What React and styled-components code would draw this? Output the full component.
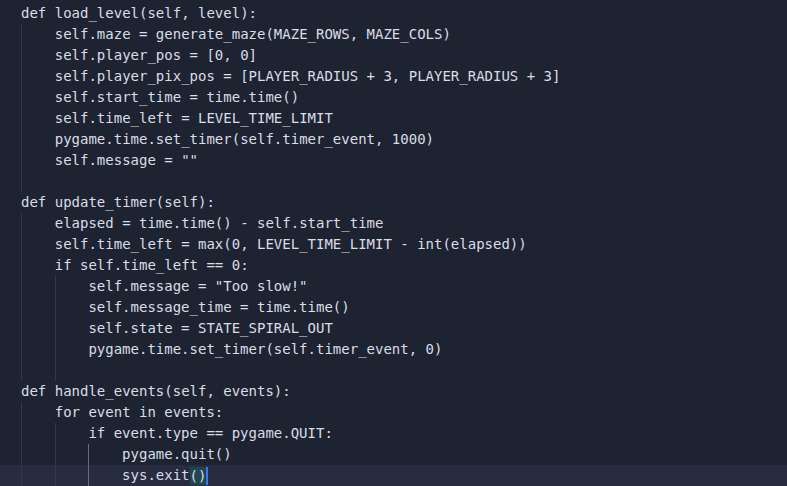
import React from "react";
import styled, { createGlobalStyle } from "styled-components";

const lines = [
  { level: 0, text: "def load_level(self, level):" },
  { level: 1, text: "self.maze = generate_maze(MAZE_ROWS, MAZE_COLS)" },
  { level: 1, text: "self.player_pos = [0, 0]" },
  { level: 1, text: "self.player_pix_pos = [PLAYER_RADIUS + 3, PLAYER_RADIUS + 3]" },
  { level: 1, text: "self.start_time = time.time()" },
  { level: 1, text: "self.time_left = LEVEL_TIME_LIMIT" },
  { level: 1, text: "pygame.time.set_timer(self.timer_event, 1000)" },
  { level: 1, text: 'self.message = ""' },
  { level: 1, text: "" },
  { level: 0, text: "def update_timer(self):" },
  { level: 1, text: "elapsed = time.time() - self.start_time" },
  { level: 1, text: "self.time_left = max(0, LEVEL_TIME_LIMIT - int(elapsed))" },
  { level: 1, text: "if self.time_left == 0:" },
  { level: 2, text: 'self.message = "Too slow!"' },
  { level: 2, text: "self.message_time = time.time()" },
  { level: 2, text: "self.state = STATE_SPIRAL_OUT" },
  { level: 2, text: "pygame.time.set_timer(self.timer_event, 0)" },
  { level: 2, text: "" },
  { level: 0, text: "def handle_events(self, events):" },
  { level: 1, text: "for event in events:" },
  { level: 2, text: "if event.type == pygame.QUIT:" },
  { level: 3, text: "pygame.quit()", active: 2 },
  { level: 3, text: "sys.exit", active: 2, current: true },
];

const GlobalStyle = createGlobalStyle`
  html, body {
    margin: 0;
    padding: 0;
    background: #1e2332;
    overflow: hidden;
  }
`;

const Editor = styled.div`
  width: 787px;
  height: 486px;
  box-sizing: border-box;
  padding-top: 3px;
  background: #1e2332;
  font-family: "DejaVu Sans Mono", monospace;
  font-size: 14px;
  line-height: 21px;
  color: #d9dde6;
  overflow: hidden;
`;

const Line = styled.div`
  display: flex;
  align-items: center;
  height: 21px;
  padding-left: 21px;
  white-space: pre;
  background: ${(p) => (p.$current ? "#272c40" : "transparent")};
`;

const Indent = styled.span`
  flex: 0 0 4ch;
  width: 4ch;
  height: 21px;
  box-sizing: border-box;
  border-left: 1px solid ${(p) => (p.$active ? "#656b7a" : "#333949")};
`;

const Code = styled.span`
  display: flex;
  align-items: center;
  height: 21px;
  line-height: 21px;
`;

const Bracket = styled.span`
  background: #22464f;
  line-height: 18px;
`;

const Caret = styled.span`
  display: inline-block;
  width: 2px;
  height: 18px;
  background: #2f7df6;
`;

export default function App() {
  return (
    <>
      <GlobalStyle />
      <Editor>
        {lines.map((line, i) => (
          <Line key={i} $current={line.current}>
            {Array.from({ length: line.level }).map((_, g) => (
              <Indent key={g} $active={line.active === g} />
            ))}
            <Code>
              {line.text}
              {line.current && (
                <>
                  <Bracket>(</Bracket>
                  <Bracket>)</Bracket>
                  <Caret />
                </>
              )}
            </Code>
          </Line>
        ))}
      </Editor>
    </>
  );
}
